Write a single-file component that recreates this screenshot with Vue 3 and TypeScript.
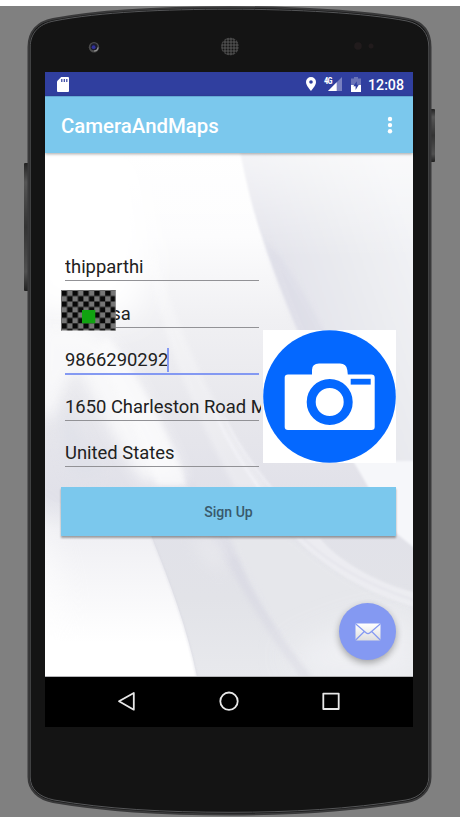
<script setup lang="ts">
import { ref } from 'vue'

interface Field {
  id: string
  value: string
  active?: boolean
  overlay?: boolean
}

const fields = ref<Field[]>([
  { id: 'first', value: 'thipparthi' },
  { id: 'last', value: 'manasa', overlay: true },
  { id: 'phone', value: '9866290292', active: true },
  { id: 'address', value: '1650 Charleston Road M' },
  { id: 'country', value: 'United States' },
])
</script>

<template>
  <div class="stage">
    <svg class="device" viewBox="0 0 460 817" aria-hidden="true">
      <defs>
        <linearGradient id="key" x1="0" y1="0" x2="0" y2="1">
          <stop offset="0" stop-color="#222" />
          <stop offset=".15" stop-color="#555" />
          <stop offset=".5" stop-color="#333" />
          <stop offset=".85" stop-color="#505050" />
          <stop offset="1" stop-color="#202020" />
        </linearGradient>
        <pattern id="mesh" width="3" height="3" patternUnits="userSpaceOnUse">
          <rect width="3" height="3" fill="#4b4b4b" />
          <circle cx="1.5" cy="1.5" r="1" fill="#151515" />
        </pattern>
      </defs>
      <rect x="24" y="163" width="5" height="128" rx="1" fill="url(#key)" />
      <rect x="430" y="109" width="5" height="53" rx="1" fill="url(#key)" />
      <path
        d="M28.5 47 C28.5 32 37 22 53 19 C100 10 165 7.200 230 7.200 C295 7.200 365 11 408 19 C423 22 430.500 32 430.500 47 V777 C430.500 790 421 800 407 802 C350 811 290 814.500 230 814.500 C165 814.500 105 811 53 802 C38 799 28.500 790 28.500 777 Z"
        fill="#141414" stroke="#39393a" stroke-width="2"
      />
      <path
        d="M30.200 47 C30.200 34 38 24 54 21 C100 12 165 9.200 230 9.200 C295 9.200 365 13 407 21 C421 24 428.800 33 428.800 47 V777 C428.800 789 419 798 406 800 C350 809 290 812.300 230 812.300 C165 812.300 105 809 54 800 C39 797 30.200 789 30.200 777 Z"
        fill="none" stroke="#555658" stroke-width="1"
      />
      <circle cx="94" cy="47.300" r="5.200" fill="#4c4c4c" />
      <circle cx="94" cy="46.800" r="3.500" fill="#1c1c2c" />
      <circle cx="93.600" cy="47.200" r="1.900" fill="#30309a" />
      <path d="M94 51 A4 4 0 0 0 98 47.500" stroke="#999" stroke-width="1.200" fill="none" />
      <circle cx="230" cy="46.500" r="9" fill="url(#mesh)" />
      <circle cx="358" cy="46" r="3.800" fill="#211b1c" />
      <circle cx="371" cy="46" r="2.500" fill="#211b1c" />
    </svg>

    <main class="screen">
      <header class="status">
        <svg class="sd" viewBox="0 0 12 15">
          <path d="M4.200 0 H11 Q12 0 12 1 V14 Q12 15 11 15 H1 Q0 15 0 14 V4.200 Z" fill="#fff" />
          <path d="M4.800 2 V5 M7.300 2 V5 M9.800 2 V5" stroke="#303f9f" stroke-width="1.200" />
        </svg>
        <div class="status-right">
          <svg class="pin" viewBox="0 0 10 14">
            <path d="M5 0 A5 5 0 0 0 0 5 C0 8.500 5 14 5 14 S10 8.500 10 5 A5 5 0 0 0 5 0 Z M5 3.200 A1.800 1.800 0 1 1 5 6.800 A1.800 1.800 0 1 1 5 3.200 Z" fill="#fff" fill-rule="evenodd" />
          </svg>
          <div class="signal">
            <span class="net">4G</span>
            <svg viewBox="0 0 14 14">
              <path d="M0 14 L14 0 V14 Z" fill="#7880c0" />
              <path d="M0 14 L8.700 5.300 V14 Z" fill="#fff" />
            </svg>
          </div>
          <svg class="battery" viewBox="0 0 10 15">
            <path d="M3 0 H7 V1.500 H10 V15 H0 V1.500 H3 Z" fill="#6a74b8" />
            <path d="M0 8 H10 V15 H0 Z" fill="#fff" />
            <path d="M5.800 4.200 L2.300 9.300 H4.600 V13 L7.800 7.700 H5.800 Z" fill="#303f9f" />
          </svg>
          <span class="clock">12:08</span>
        </div>
      </header>

      <div class="toolbar">
        <h1>CameraAndMaps</h1>
        <svg class="more" viewBox="0 0 6 18">
          <circle cx="3" cy="3" r="2.200" /><circle cx="3" cy="9.100" r="2.200" /><circle cx="3" cy="15.200" r="2.200" />
        </svg>
      </div>

      <section class="content">
        <svg class="wallpaper" viewBox="0 0 368 524" preserveAspectRatio="none" aria-hidden="true">
          <defs>
            <linearGradient id="base" x1="0" y1="0" x2="0" y2="1">
              <stop offset="0" stop-color="#fff" />
              <stop offset=".16" stop-color="#fcfcfd" />
              <stop offset=".32" stop-color="#f0f0f3" />
              <stop offset=".5" stop-color="#e7e7ec" />
              <stop offset=".65" stop-color="#e1e1e9" />
              <stop offset=".85" stop-color="#e2e3e8" />
              <stop offset="1" stop-color="#e8e9ed" />
            </linearGradient>
            <linearGradient id="right" gradientUnits="userSpaceOnUse" x1="225" y1="140" x2="368" y2="90">
              <stop offset="0" stop-color="#e2e2ea" />
              <stop offset=".5" stop-color="#e9eaef" />
              <stop offset="1" stop-color="#f1f2f5" />
            </linearGradient>
            <linearGradient id="fadeTop" x1="0" y1="0" x2="0" y2="1">
              <stop offset="0" stop-color="#fff" stop-opacity=".6" />
              <stop offset=".2" stop-color="#fff" stop-opacity="0" />
            </linearGradient>
            <linearGradient id="lowerLeft" gradientUnits="userSpaceOnUse" x1="0" y1="340" x2="0" y2="490">
              <stop offset="0" stop-color="#e8e9ee" stop-opacity="0" />
              <stop offset=".25" stop-color="#efeff3" />
              <stop offset="1" stop-color="#fff" />
            </linearGradient>
            <filter id="haze" x="-60%" y="-60%" width="220%" height="220%"><feGaussianBlur stdDeviation="16" /></filter>
            <filter id="soft" x="-30%" y="-30%" width="160%" height="160%"><feGaussianBlur stdDeviation="7" /></filter>
            <filter id="soft2" x="-20%" y="-20%" width="140%" height="140%"><feGaussianBlur stdDeviation="2.500" /></filter>
            <filter id="soft1" x="-5%" y="-5%" width="110%" height="110%"><feGaussianBlur stdDeviation=".8" /></filter>
          </defs>
          <rect width="368" height="524" fill="url(#base)" />
          <path d="M-20 0 H90 L105 100 L90 165 L-20 160 Z" fill="#fff" filter="url(#haze)" />
          <path d="M-5 340 C40 370 80 350 104 378 L107 385 C125 430 142 475 152 524 H-5 Z" fill="url(#lowerLeft)" />
          <path d="M-20 350 C5 370 20 440 20 524 H-20 Z" fill="#fff" filter="url(#haze)" opacity=".7" />
          <path d="M110 100 C130 170 165 255 225 335 L190 335 C150 260 118 190 104 110 Z" fill="#fff" opacity=".28" filter="url(#soft2)" />
          <path d="M10 240 C30 260 35 290 60 325 L25 320 Z" fill="#dcdfe8" opacity=".5" filter="url(#soft)" />
          <path d="M-6 172 C20 168 50 175 66 190 C90 220 122 280 140 328 L96 328 C72 290 50 250 34 215 C15 225 18 250 4 270 L-6 250 Z" fill="#fbfbfc" opacity=".85" filter="url(#soft)" />
          <path d="M62 183 C90 220 122 275 142 332 L112 332 C95 280 70 235 50 200 Z" fill="#fbfbfc" opacity=".7" filter="url(#soft2)" />
          <path d="M140 322 C160 345 185 380 205 420 L240 480 L226 475 C195 430 160 385 140 322 Z" fill="#d8d8e4" opacity=".4" filter="url(#soft2)" />
          <path d="M146 384 C152 405 163 415 178 422 L180 384 Z" fill="#eeeef1" opacity=".4" filter="url(#soft)" />
          <path d="M165 250 C185 295 205 325 250 382" fill="none" stroke="#f5f5fa" stroke-width="3" opacity=".6" filter="url(#soft1)" />
          <path d="M180 265 C200 310 230 335 262 382" fill="none" stroke="#f5f5fa" stroke-width="2" opacity=".5" filter="url(#soft1)" />
          <path d="M195 -2 C201 30 210 65 219 90 C231 125 251 178 278 230 C301 273 322 332 352 378 L380 400 V-2 Z" fill="url(#right)" filter="url(#soft1)" />
          <path d="M219 85 C235 140 257 190 278 230 L300 225 C278 175 255 125 219 85 Z" fill="#dadae6" opacity=".5" filter="url(#soft2)" />
          <path d="M308 308 C325 336 338 362 352 381 L372 397 V308 Z" fill="#f6f7fa" filter="url(#soft1)" />
          <path d="M186 385 C204 440 235 485 267 526 H370 V456 C320 440 280 415 247 385 Z" fill="#e7e8ec" opacity=".85" filter="url(#soft2)" />
          <path d="M240 500 C250 510 258 518 267 526 H370 V466 C330 462 290 475 240 500 Z" fill="#f2f3f6" opacity=".8" filter="url(#haze)" />
          <path d="M250 385 C280 415 320 440 372 455 V440 C330 430 290 405 275 385 Z" fill="#f1f1f5" opacity=".7" filter="url(#soft1)" />
          <path d="M258 385 C290 415 330 435 372 448" fill="none" stroke="#e3e3ea" stroke-width="1.500" filter="url(#soft1)" />
          <path d="M188 405 C200 440 234 489 263 526" fill="none" stroke="#d9d9e3" stroke-width="9" opacity=".5" filter="url(#soft2)" />
          <path d="M107 385 C125 430 142 475 152 524" fill="none" stroke="#d8d8e1" stroke-width="1.500" opacity=".6" filter="url(#soft1)" />
          <rect width="368" height="524" fill="url(#fadeTop)" />
          <rect y="523" width="368" height="1" fill="#b5b5b8" />
        </svg>

        <div class="form">
          <div class="entry">
            <div class="fields">
              <div v-for="f in fields" :key="f.id" class="field" :class="{ active: f.active }">
                <span class="value">{{ f.value }}</span>
                <svg v-if="f.overlay" class="checker" viewBox="0 0 54.600 40.500">
                  <defs>
                    <pattern id="squares" x=".6" y=".6" width="10.900" height="10.900" patternUnits="userSpaceOnUse">
                      <rect width="10.900" height="10.900" fill="#767676" />
                      <rect width="5.450" height="5.450" fill="#080808" />
                      <rect x="5.450" y="5.450" width="5.450" height="5.450" fill="#080808" />
                    </pattern>
                  </defs>
                  <rect width="54.600" height="40.500" fill="url(#squares)" />
                  <path d="M.3 40.500 V.3 H54.300 V40.500" fill="none" stroke="#858585" stroke-width=".8" />
                  <rect x="21" y="20" width="13.300" height="13.300" fill="#11a311" />
                </svg>
              </div>
            </div>
            <svg class="camera" viewBox="0 0 133 133">
              <rect width="133" height="133" fill="#fff" />
              <circle cx="66.500" cy="66.500" r="66.300" fill="#0468ff" />
              <path d="M25 44.500 H49 V40 Q49 33.500 56 33.500 H77 Q83.500 33.500 84.300 40 L84.800 44.500 H108.500 Q111.700 44.500 111.700 47.500 V97 Q111.700 100 108.500 100 H25 Q21.700 100 21.700 97 V47.500 Q21.700 44.500 25 44.500 Z" fill="#fff" />
              <circle cx="66.700" cy="72" r="18.500" fill="#fff" stroke="#0468ff" stroke-width="9" />
              <rect x="87.700" y="48.800" width="20" height="5.800" fill="#0468ff" />
            </svg>
          </div>
          <button class="signup" type="button">Sign Up</button>
        </div>

        <button class="fab" type="button" aria-label="Email">
          <svg viewBox="0 0 26 18">
            <defs>
              <linearGradient id="paper" x1="0" y1="0" x2="0" y2="1">
                <stop offset="0" stop-color="#fff" /><stop offset="1" stop-color="#dedede" />
              </linearGradient>
            </defs>
            <rect x=".5" y=".5" width="25" height="17" rx=".8" fill="url(#paper)" />
            <path d="M.5 .8 L11 9.800 Q13 11.500 15 9.800 L25.500 .8 M.5 17.200 L9.300 8.500 M25.500 17.200 L16.700 8.500" fill="none" stroke="#8499f2" stroke-width="1.200" />
          </svg>
        </button>
      </section>

      <nav class="nav">
        <svg viewBox="0 0 20 20"><path d="M2 10.300 L16.800 2 V18.700 Z" /></svg>
        <svg viewBox="0 0 20 20"><circle cx="10" cy="10.200" r="8.700" /></svg>
        <svg viewBox="0 0 20 20"><rect x="2.300" y="2.600" width="15.400" height="15.400" /></svg>
      </nav>
    </main>
  </div>
</template>

<style>
body {
  background: #fff;
}
</style>

<style scoped>
.stage {
  position: relative;
  box-sizing: border-box;
  width: 460px;
  height: 817px;
  padding: 72px 47px 90px 45px;
  overflow: hidden;
  background: linear-gradient(#fff 6px, #808080 6px);
  font-family: Roboto, "Liberation Sans", sans-serif;
}
.device {
  position: absolute;
  inset: 0;
  width: 460px;
  height: 817px;
}
.screen {
  position: relative;
  display: flex;
  flex-direction: column;
  width: 368px;
  height: 655px;
  background: #000;
}
.status {
  display: flex;
  align-items: center;
  justify-content: space-between;
  flex: none;
  height: 24px;
  padding: 0 9px 0 12px;
  box-sizing: border-box;
  background: #303f9f;
}
.sd {
  width: 12px;
  height: 15px;
}
.status-right {
  display: flex;
  align-items: center;
}
.pin {
  width: 10px;
  height: 14px;
  margin-right: 8px;
}
.signal {
  display: flex;
  align-items: flex-start;
  width: 18px;
  height: 15px;
  margin-right: 9px;
}
.net {
  width: 4px;
  color: #fff;
  font: 700 8.5px/8px "Roboto Condensed", Roboto, sans-serif;
  letter-spacing: -0.8px;
  white-space: nowrap;
}
.signal svg {
  flex: none;
  width: 14px;
  height: 14px;
  margin-top: 0;
}
.battery {
  width: 10px;
  height: 15px;
  margin-right: 7px;
}
.clock {
  padding-top: 2px;
  color: #fff;
  font-size: 14.2px;
  font-weight: 500;
  line-height: 22px;
}
.toolbar {
  position: relative;
  z-index: 1;
  display: flex;
  align-items: center;
  justify-content: space-between;
  flex: none;
  height: 57px;
  padding: 0 20px 0 16px;
  box-sizing: border-box;
  background: #7bc8ed;
  box-shadow: 0 1px 3px rgba(0, 0, 0, 0.35), inset 0 1px 0 rgba(40, 80, 140, 0.25);
}
.toolbar h1 {
  margin: 2px 0 0;
  color: #fff;
  font-size: 20.4px;
  font-weight: 500;
  line-height: 28px;
}
.more {
  width: 6px;
  height: 18px;
  fill: #fff;
}
.content {
  position: relative;
  flex: none;
  height: 524px;
  overflow: hidden;
}
.wallpaper {
  position: absolute;
  inset: 0;
  width: 100%;
  height: 100%;
}
.form {
  position: relative;
  padding: 91px 17px 0 16px;
}
.entry {
  display: flex;
  align-items: flex-end;
  justify-content: space-between;
}
.fields {
  width: 202px;
  padding-bottom: 1.5px;
}
.field {
  position: relative;
  display: flex;
  align-items: flex-end;
  height: 46.4px;
  padding: 0 4px 10px;
  margin: 0;
  box-sizing: border-box;
}
.field::after {
  position: absolute;
  right: 4px;
  bottom: 9px;
  left: 4px;
  height: 1px;
  background: #929296;
  content: "";
}
.field.active::after {
  bottom: 8px;
  height: 2px;
  background: #8499f2;
}
.value {
  width: 196px;
  flex: none;
  padding-bottom: 1px;
  overflow: hidden;
  color: #212121;
  font-size: 18.4px;
  line-height: 24px;
  white-space: nowrap;
}
.field.active .value::after {
  display: inline-block;
  width: 2px;
  height: 24px;
  margin-left: -1px;
  vertical-align: top;
  background: #8499f2;
  content: "";
}
.checker {
  position: absolute;
  z-index: 1;
  top: -0.4px;
  left: 0;
  width: 54.600px;
  height: 40.500px;
}
.camera {
  flex: none;
  width: 133px;
  height: 133px;
  margin-bottom: 14.5px;
}
.signup {
  display: block;
  width: 335px;
  height: 49px;
  margin-top: 9.5px;
  padding: 1px 0 0;
  border: 0;
  background: #7bc8ed;
  box-shadow: 0 1.500px 2px rgba(0, 0, 0, 0.35);
  color: #39596b;
  font: 500 14.100px/48px Roboto, sans-serif;
}
.fab {
  position: absolute;
  right: 17px;
  bottom: 17px;
  display: flex;
  align-items: center;
  justify-content: center;
  width: 57px;
  height: 57px;
  padding: 0;
  border: 0;
  border-radius: 50%;
  background: #8499f2;
  box-shadow: 0 3px 7px rgba(0, 0, 0, 0.32);
}
.fab svg {
  width: 26px;
  height: 18px;
}
.nav {
  display: flex;
  align-items: center;
  justify-content: space-between;
  flex: none;
  height: 50px;
  padding: 2px 72px 4px;
  box-sizing: border-box;
  background: #000;
}
.nav svg {
  width: 20px;
  height: 20px;
  fill: none;
  stroke: #e8e8e8;
  stroke-width: 1.800;
  stroke-linejoin: round;
}
</style>
